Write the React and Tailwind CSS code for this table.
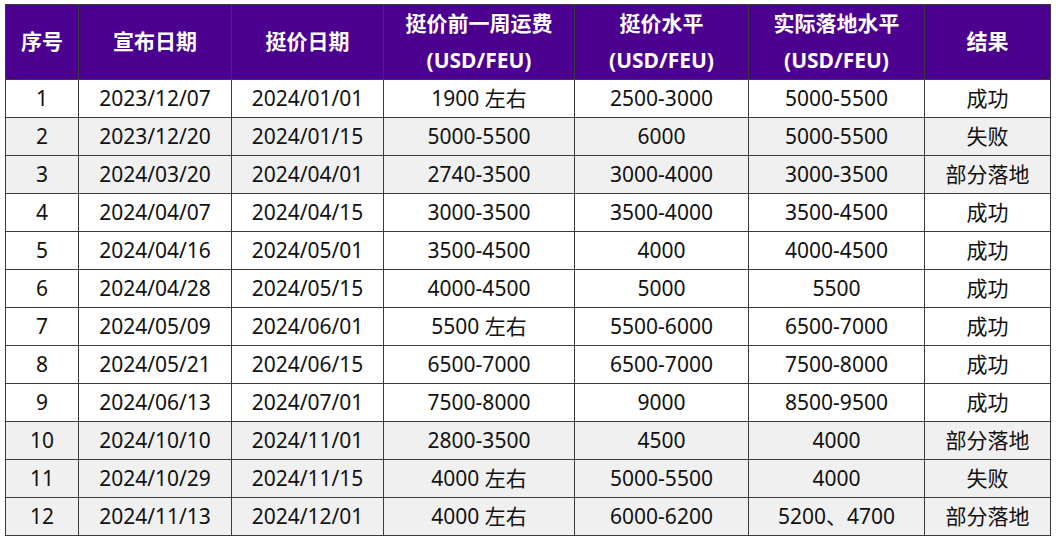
import React from "react";

const rows = [
  ["1", "2023/12/07", "2024/01/01", "1900 左右", "2500-3000", "5000-5500", "成功"],
  ["2", "2023/12/20", "2024/01/15", "5000-5500", "6000", "5000-5500", "失败"],
  ["3", "2024/03/20", "2024/04/01", "2740-3500", "3000-4000", "3000-3500", "部分落地"],
  ["4", "2024/04/07", "2024/04/15", "3000-3500", "3500-4000", "3500-4500", "成功"],
  ["5", "2024/04/16", "2024/05/01", "3500-4500", "4000", "4000-4500", "成功"],
  ["6", "2024/04/28", "2024/05/15", "4000-4500", "5000", "5500", "成功"],
  ["7", "2024/05/09", "2024/06/01", "5500 左右", "5500-6000", "6500-7000", "成功"],
  ["8", "2024/05/21", "2024/06/15", "6500-7000", "6500-7000", "7500-8000", "成功"],
  ["9", "2024/06/13", "2024/07/01", "7500-8000", "9000", "8500-9500", "成功"],
  ["10", "2024/10/10", "2024/11/01", "2800-3500", "4500", "4000", "部分落地"],
  ["11", "2024/10/29", "2024/11/15", "4000 左右", "5000-5500", "4000", "失败"],
  ["12", "2024/11/13", "2024/12/01", "4000 左右", "6000-6200", "5200、4700", "部分落地"],
];

const widths = ["w-[73px]", "w-[153px]", "w-[152px]", "w-[191px]", "w-[174px]", "w-[176px]", "w-[126px]"];

export default function App() {
  return (
    <div className="w-[1056px] h-[541px] bg-white pl-[5px] pt-[4px] font-['Noto_Sans','Noto_Sans_CJK_SC',sans-serif]">
      <table className="table-fixed border-collapse w-[1045px] text-[#111] text-[21px]">
        <colgroup>
          {widths.map((w, i) => (
            <col key={i} className={w} />
          ))}
        </colgroup>
        <thead>
          <tr className="bg-[#4b0090] text-white font-bold h-[75px]">
            <th className="border border-[#3a3a3a] p-0">序号</th>
            <th className="border border-[#3a3a3a] p-0">宣布日期</th>
            <th className="border border-[#3a3a3a] p-0">挺价日期</th>
            <th className="border border-[#3a3a3a] p-0 leading-[37px]">
              挺价前一周运费
              <br />
              (USD/FEU)
            </th>
            <th className="border border-[#3a3a3a] p-0 leading-[37px]">
              挺价水平
              <br />
              (USD/FEU)
            </th>
            <th className="border border-[#3a3a3a] p-0 leading-[37px]">
              实际落地水平
              <br />
              (USD/FEU)
            </th>
            <th className="border border-[#3a3a3a] p-0">结果</th>
          </tr>
        </thead>
        <tbody>
          {rows.map((r) => (
            <tr key={r[0]} className={`h-[38px] ${r[6] === "成功" ? "bg-white" : "bg-[#f0f0f0]"}`}>
              {r.map((c, i) => (
                <td key={i} className="border border-[#3a3a3a] p-0 text-center leading-none">
                  {c}
                </td>
              ))}
            </tr>
          ))}
        </tbody>
      </table>
    </div>
  );
}
